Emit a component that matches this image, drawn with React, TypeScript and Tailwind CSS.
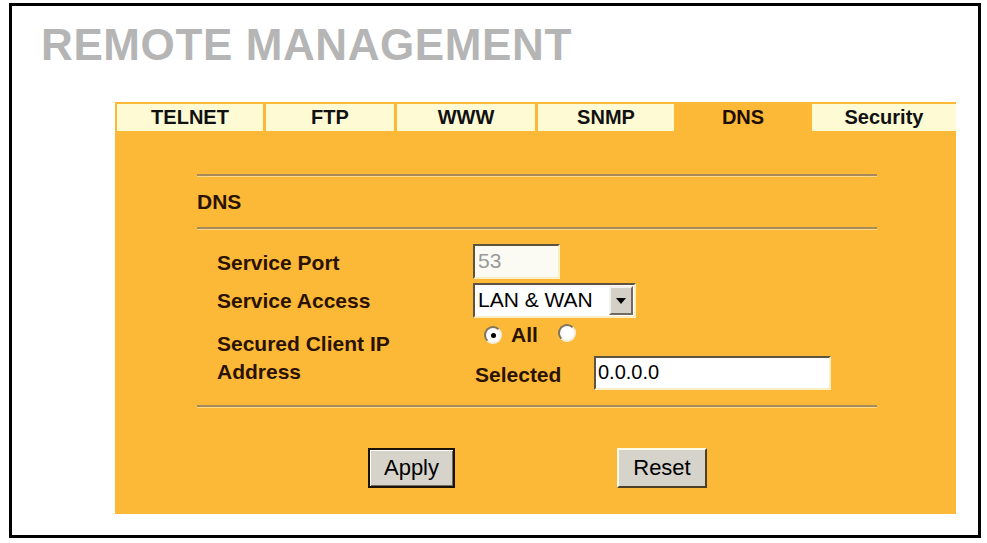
import React from 'react'

const tabs = [
  { label: 'TELNET', w: 'w-[146px]', active: false },
  { label: 'FTP', w: 'w-[128px]', active: false },
  { label: 'WWW', w: 'w-[138px]', active: false },
  { label: 'SNMP', w: 'w-[136px]', active: false },
  { label: 'DNS', w: 'w-[132px]', active: true },
  { label: 'Security', w: 'w-[144px]', active: false },
]

const Rule = () => (
  <div className="h-[3px] border-t-2 border-[#a68a58] border-b border-b-[#fed98e]" />
)

const Radio = ({ checked }: { checked?: boolean }) => (
  <span className="relative inline-flex w-[18px] h-[18px] rounded-full bg-white border-2 border-t-[#7d7560] border-l-[#7d7560] border-r-[#f3efe3] border-b-[#f3efe3] items-center justify-center">
    {checked && <span className="w-[5px] h-[5px] rounded-full bg-black" />}
  </span>
)

const sunken =
  'border-2 border-t-[#5e5340] border-l-[#5e5340] border-r-[#fdeec4] border-b-[#fdeec4]'

export default function App() {
  return (
    <div className="font-['Liberation_Sans',Arial,sans-serif] bg-white w-[987px] h-[543px] pt-[3px] pl-[9px]">
      <div className="w-[972px] h-[535px] border-[3px] border-black">
        <div className="mt-[13px] pl-[29px] text-[44px] leading-[52px] font-bold text-[#b5b5b5] tracking-[0.6px]">
          REMOTE MANAGEMENT
        </div>

        <div className="ml-[103px] mt-[31px] w-[841px] bg-[#fcb937] pb-[26px]">
          {/* tab strip */}
          <div className="flex gap-[3px] pt-[2px] pl-[2px]">
            {tabs.map((t) => (
              <div
                key={t.label}
                className={`${t.w} h-[27px] flex justify-center text-[20px] leading-[27px] font-bold ${
                  t.active ? 'bg-[#fcb937] text-[#1c0d00]' : 'bg-[#fefad3] text-[#111]'
                }`}
              >
                {t.label}
              </div>
            ))}
          </div>

          <div className="ml-[82px] w-[680px] mt-[43px]">
            <Rule />
            <div className="mt-[14px] text-[21px] leading-[22px] font-bold text-[#2a1200]">DNS</div>
            <div className="mt-[14px]">
              <Rule />
            </div>

            <div className="mt-[14px] pl-[20px] text-[21px] font-bold text-[#2a1200]">
              <div className="flex items-center h-[35px]">
                <div className="w-[256px] pt-[3px]">Service Port</div>
                <div className={`w-[87px] h-[35px] bg-[#fbfbf4] ${sunken} pl-[3px] text-[21px] leading-[30px] font-normal text-[#9a9a9a]`}>
                  53
                </div>
              </div>

              <div className="flex items-center h-[35px] mt-[4px]">
                <div className="w-[256px]">Service Access</div>
                <div className={`w-[163px] h-[35px] bg-white ${sunken} flex items-stretch`}>
                  <span className="flex-1 pl-[3px] text-[21px] leading-[30px] font-normal text-black whitespace-nowrap">
                    LAN &amp; WAN
                  </span>
                  <span className="w-[24px] m-[1px] bg-[#d4d0c8] border-2 border-t-[#f4f2ec] border-l-[#f4f2ec] border-r-[#6f6b63] border-b-[#6f6b63] flex items-center justify-center">
                    <svg width="10" height="6" viewBox="0 0 10 6">
                      <path d="M0 0h10L5 6z" fill="#000" />
                    </svg>
                  </span>
                </div>
              </div>

              <div className="flex mt-[1px]">
                <div className="w-[256px] pt-[11px] leading-[28px]">
                  <div>Secured Client IP</div>
                  <div>Address</div>
                </div>
                <div className="flex flex-col">
                  <div className="h-[32px] flex items-center pl-[11px] gap-[9px]">
                    <Radio checked />
                    <span className="text-[21px]">All</span>
                    <span className="ml-[11px]">
                      <Radio />
                    </span>
                  </div>
                  <div className="mt-[5px] h-[34px] flex items-center">
                    <span className="w-[121px] pl-[2px] pt-[4px]">Selected</span>
                    <div className={`w-[237px] h-[34px] bg-white ${sunken} pl-[2px] text-[20px] leading-[29px] font-normal text-black`}>
                      0.0.0.0
                    </div>
                  </div>
                </div>
              </div>
            </div>

            <div className="mt-[15px]">
              <Rule />
            </div>

            <div className="flex mt-[40px] pl-[171px]">
              <button className="w-[87px] h-[40px] bg-[#d6d3cb] border-2 border-[#1b1208] shadow-[inset_1px_1px_0_#ffffff,inset_-1px_-1px_0_#6f6b63] text-[22px] leading-[34px] text-black">
                Apply
              </button>
              <button className="ml-[162px] w-[90px] h-[40px] bg-[#d6d3cb] border-2 border-t-[#fdfbe9] border-l-[#fdfbe9] border-r-[#4d3f28] border-b-[#4d3f28] text-[22px] leading-[34px] text-black">
                Reset
              </button>
            </div>
          </div>
        </div>
      </div>
    </div>
  )
}
